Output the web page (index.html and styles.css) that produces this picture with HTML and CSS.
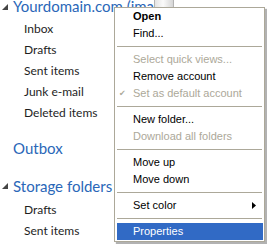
FILE: index.html
```html
<!DOCTYPE html>
<html lang="en">
<head>
  <meta charset="UTF-8">
  <title>Folder menu</title>
  <link rel="stylesheet" href="styles.css">
</head>
<body>
  <div id="folders">
    <div class="group-title account">
      <span class="toggle"><svg width="6" height="6" viewBox="0 0 6 6"><polygon points="6,0 6,6 0,6" fill="#454545"/></svg></span>
      Yourdomain.com (imap)
    </div>
    <ul class="folder-list first">
      <li>Inbox</li>
      <li>Drafts</li>
      <li>Sent items</li>
      <li>Junk e-mail</li>
      <li>Deleted items</li>
    </ul>

    <div class="group-title outbox">
      <span class="toggle"></span>
      Outbox
    </div>

    <div class="group-title storage">
      <span class="toggle"><svg width="6" height="6" viewBox="0 0 6 6"><polygon points="6,0 6,6 0,6" fill="#454545"/></svg></span>
      Storage folders
    </div>
    <ul class="folder-list second">
      <li>Drafts</li>
      <li>Sent items</li>
    </ul>
  </div>

  <div class="scroll-thumb"></div>

  <!-- context menu -->
  <div class="menu">
    <div class="item bold">Open</div>
    <div class="item">Find...</div>
    <div class="sep"></div>
    <div class="item disabled">Select quick views...</div>
    <div class="item">Remove account</div>
    <div class="item disabled"><span class="check">&#10004;</span>Set as default account</div>
    <div class="sep"></div>
    <div class="item">New folder...</div>
    <div class="item disabled">Download all folders</div>
    <div class="sep"></div>
    <div class="item">Move up</div>
    <div class="item">Move down</div>
    <div class="sep"></div>
    <div class="item submenu">Set color
      <svg class="arrow" width="4" height="7" viewBox="0 0 4 7"><polygon points="0,0 4,3.5 0,7" fill="#000"/></svg>
    </div>
    <div class="sep"></div>
    <div class="item selected">Properties</div>
  </div>
</body>
</html>
```

FILE: styles.css
```css
body {
  margin: 0;
  background: #fff;
  font-family: Lato, "Noto Sans", sans-serif;
  overflow: hidden;
}

#folders {
  padding-left: 2px;
}

.group-title {
  display: flex;
  align-items: center;
  height: 22px;
  line-height: 22px;
  font-size: 15px;
  color: #2a67b8;
  white-space: nowrap;
}

/* first title sits right at the top edge */
.group-title.account {
  height: 13px;
  line-height: 13px;
  margin-bottom: 4px;
}

.toggle {
  display: inline-flex;
  width: 11px;
  flex-shrink: 0;
}

.group-title.outbox {
  margin-top: 14px;
}

.group-title.storage {
  margin-top: 16px;
}

.folder-list {
  list-style: none;
  margin: 0;
  padding: 0 0 0 22px;
}

.folder-list.first {
  padding-top: 1px;
}

.folder-list.second {
  padding-top: 2px;
}

.folder-list li {
  height: 21px;
  line-height: 21px;
  font-size: 12px;
  color: #1e1e1e;
}

.scroll-thumb {
  position: absolute;
  left: 154px;
  top: 0;
  width: 18px;
  height: 8px;
  border-left: 1px solid #b4b4b4;
  border-right: 1px solid #b4b4b4;
  background: linear-gradient(to right, #e4e4e4, #fafafa 45%, #d6d6d6);
}

.menu {
  position: absolute;
  left: 114px;
  top: 7px;
  width: 146px;
  padding: 0 1px 1px 2px;
  border: 1px solid #aca899;
  background: #fff;
  box-shadow: 2px 2px 1px rgba(0, 0, 0, 0.3);
  font-family: "Liberation Sans", Arial, sans-serif;
  font-size: 11px;
  color: #000;
}

.item {
  position: relative;
  height: 17px;
  line-height: 17px;
  padding-left: 16px;
  white-space: nowrap;
}

.item.bold {
  font-weight: bold;
}

.item.disabled {
  color: #aca899;
}

.item.selected {
  background: #316ac5;
  color: #fff;
}

.check {
  position: absolute;
  left: 2px;
  top: 0;
  font-family: "DejaVu Sans", sans-serif;
  font-size: 8px;
  color: #aca899;
}

.arrow {
  position: absolute;
  right: 7px;
  top: 5px;
}

.sep {
  height: 9px;
  position: relative;
}

.sep::after {
  content: "";
  position: absolute;
  left: 0;
  right: 1px;
  top: 4px;
  height: 1px;
  background: #aca899;
}
```
